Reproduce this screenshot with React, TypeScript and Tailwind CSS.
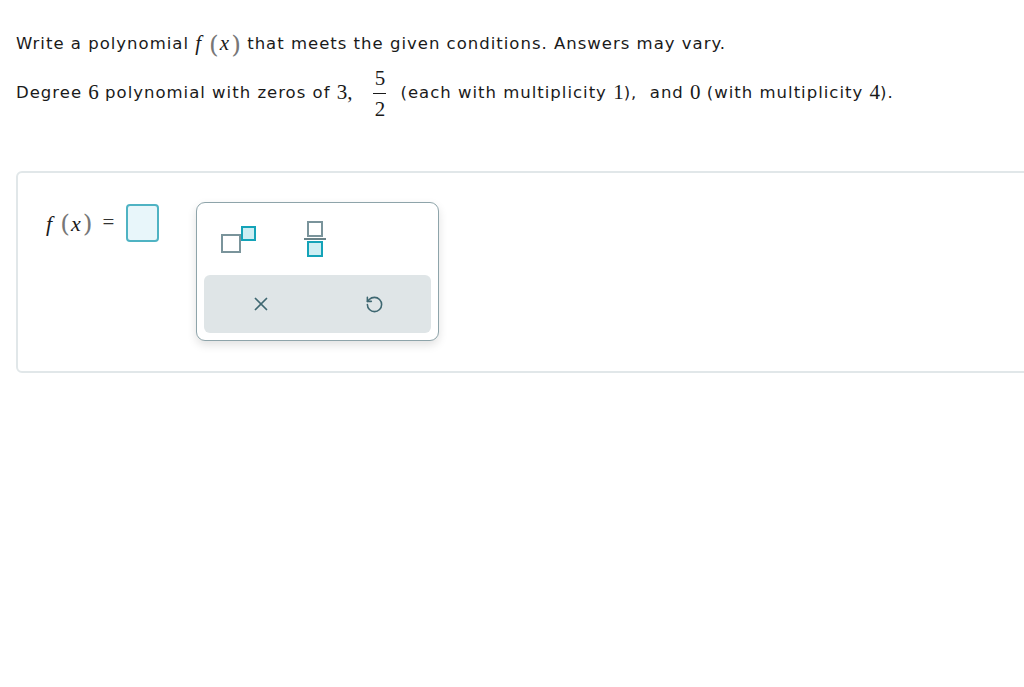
import { X, RotateCcw } from "lucide-react";

function MathFx({ size = "text-[21px]" }: { size?: string }) {
  return (
    <span className={`font-['Liberation_Serif',serif] ${size} tracking-normal inline-flex items-center`}>
      <i>f</i>
      <span className="ml-[8px] mr-[1px] text-[#777] text-[25px] leading-none font-['DejaVu_Serif',serif] font-light">(</span>
      <i>x</i>
      <span className="ml-[2px] text-[#777] text-[25px] leading-none font-['DejaVu_Serif',serif] font-light">)</span>
    </span>
  );
}

function Num({ children }: { children: React.ReactNode }) {
  return <span className="font-['Liberation_Serif',serif] text-[21px] tracking-normal">{children}</span>;
}

function SuperscriptIcon() {
  return (
    <svg width="36" height="28" viewBox="0 0 36 28">
      <rect x="1" y="9" width="18" height="17" fill="none" stroke="#7a949b" strokeWidth="2" />
      <rect x="21" y="1" width="13" height="13" fill="#cdeef3" stroke="#14a3b8" strokeWidth="2" />
    </svg>
  );
}

function FractionIcon() {
  return (
    <svg width="22" height="36" viewBox="0 0 22 36">
      <rect x="4" y="1" width="14" height="14" fill="none" stroke="#7a949b" strokeWidth="2" />
      <line x1="0" y1="18" x2="22" y2="18" stroke="#6a8288" strokeWidth="2" />
      <rect x="4" y="21" width="14" height="14" fill="#cdeef3" stroke="#14a3b8" strokeWidth="2" />
    </svg>
  );
}

export default function App() {
  return (
    <div className="min-h-screen bg-white overflow-hidden font-['DejaVu_Sans',Verdana,sans-serif] text-[#1a1a1a]">
      <div className="pl-4 pt-[28px] text-[16.5px] tracking-[1px]">
        <p className="h-[32px] flex items-center">
          <span>Write a polynomial&nbsp;</span>
          <MathFx />
          <span>&nbsp;that meets the given conditions. Answers may vary.</span>
        </p>

        <p className="mt-[5px] h-[56px] flex items-center">
          <span>Degree&nbsp;</span>
          <Num>6</Num>
          <span>&nbsp;polynomial with zeros of&nbsp;</span>
          <Num>3,</Num>
          <span className="inline-flex flex-col items-center ml-[21px] mr-[14px] font-['Liberation_Serif',serif] text-[21px] leading-[22px] tracking-normal">
            <span>5</span>
            <span className="block w-[13px] h-[1px] bg-[#1a1a1a] my-[4px]"></span>
            <span>2</span>
          </span>
          <span>(each with multiplicity&nbsp;</span>
          <Num>1</Num>
          <span>),&nbsp;&nbsp;and&nbsp;</span>
          <Num>0</Num>
          <span>&nbsp;(with multiplicity&nbsp;</span>
          <Num>4</Num>
          <span>).</span>
        </p>
      </div>

      <div className="ml-4 mr-[-12px] mt-[50px] h-[202px] border-2 border-[#e1e7e9] rounded-[6px] flex items-start pt-[29px] pl-[28px]">
        <div className="flex items-center h-[38px] mt-[2px]">
          <MathFx size="text-[22px]" />
          <span className="ml-[10px] font-['Liberation_Serif',serif] text-[21px] text-[#333]">=</span>
          <div className="ml-[12px] w-[33px] h-[38px] rounded-[4px] border-2 border-[#4fb3c3] bg-[#e8f6fa]"></div>
        </div>

        <div className="ml-[37px] w-[243px] h-[139px] rounded-[9px] border border-[#8ea4aa] bg-white shadow-[0_4px_10px_rgba(0,0,0,0.12)] px-[7px] pb-[7px] flex flex-col">
          <div className="h-[72px] flex items-center">
            <div className="ml-[17px] mt-[1px]">
              <SuperscriptIcon />
            </div>
            <div className="ml-[47px]">
              <FractionIcon />
            </div>
          </div>
          <div className="flex-1 grid grid-cols-2 rounded-[6px] bg-[#dfe5e7] items-center">
            <div className="flex justify-center">
              <X size={22} strokeWidth={1.9} color="#3e6771" />
            </div>
            <div className="flex justify-center">
              <RotateCcw size={19} strokeWidth={2} color="#3e6771" />
            </div>
          </div>
        </div>
      </div>
    </div>
  );
}
